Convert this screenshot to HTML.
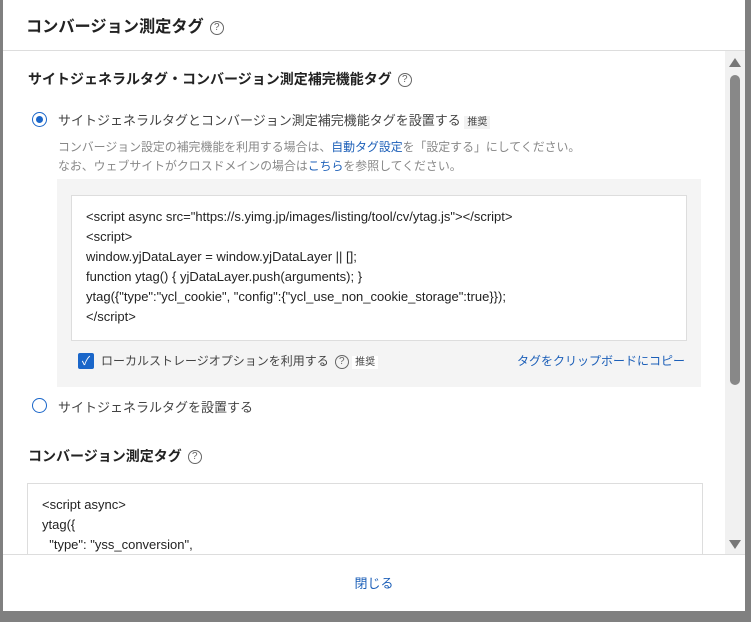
<!DOCTYPE html>
<html><head><meta charset="utf-8"><style>
*{box-sizing:border-box;margin:0;padding:0}
body{width:751px;height:622px;background:#808080;position:relative;overflow:hidden;font-family:"Liberation Sans","Noto Sans CJK JP",sans-serif;color:#333}
.modal{position:absolute;left:3px;top:0;width:742px;height:611px;background:#fff;overflow:hidden}
.hd{height:51px;border-bottom:1px solid #ddd;padding:13px 0 0 23px;font-size:16.2px;font-weight:bold;color:#222}
.q{display:inline-block;width:14px;height:14px;border:1px solid #666;border-radius:50%;font-size:10px;line-height:12px;text-align:center;color:#666;font-weight:normal;vertical-align:middle;margin-left:6px}
.abs{position:absolute;white-space:nowrap}
.h2{font-size:14px;font-weight:bold;color:#222}
.radio{width:15px;height:15px;border:1.5px solid #1a66c9;border-radius:50%;position:absolute}
.radio.on::after{content:"";position:absolute;left:2.5px;top:2.5px;width:7px;height:7px;border-radius:50%;background:#1a66c9}
.badge{background:#f2f2f2;font-size:10px;padding:1px 3px;color:#444}
.note{font-size:11.9px;color:#888}
.link{color:#1c5fb8}
.gray{position:absolute;left:54px;top:179px;width:644px;height:208px;background:#f4f4f4}
.ta{position:absolute;left:68px;top:195px;width:616px;height:146px;background:#fff;border:1px solid #ddd;padding:11px 0 0 14px;font-size:13px;line-height:20px;color:#222;white-space:pre}
.ta2{position:absolute;left:24px;top:483px;width:676px;height:80px;background:#fff;border:1px solid #ddd;padding:11px 0 0 14px;font-size:13px;line-height:20px;color:#222;white-space:pre}
.cb{position:absolute;left:75px;top:353px;width:16px;height:16px;background:#1a66c9;border-radius:2px;color:#fff;font-size:12px;line-height:16px;text-align:center}
.sb{position:absolute;left:722px;top:51px;width:20px;height:503px;background:#f1f1f1}
.thumb{position:absolute;left:727px;top:75px;width:10px;height:310px;background:#888;border-radius:5px}
.ft{position:absolute;left:0;top:554px;width:742px;height:57px;border-top:1px solid #ddd;background:#fff;text-align:center;padding-top:18px;font-size:13px;color:#1c5fb8}
</style></head><body>
<div class="modal">
<div class="hd">コンバージョン測定タグ<span class="q">?</span></div>
<div class="abs h2" style="left:25px;top:69px">サイトジェネラルタグ・コンバージョン測定補完機能タグ<span class="q">?</span></div>
<div class="radio on" style="left:29px;top:112px"></div>
<div class="abs" style="left:55px;top:110px;font-size:13px;color:#444">サイトジェネラルタグとコンバージョン測定補完機能タグを設置する <span class="badge">推奨</span></div>
<div class="abs note" style="left:55px;top:138px">コンバージョン設定の補完機能を利用する場合は、<span class="link">自動タグ設定</span>を「設定する」にしてください。</div>
<div class="abs note" style="left:55px;top:157px">なお、ウェブサイトがクロスドメインの場合は<span class="link">こちら</span>を参照してください。</div>
<div class="gray"></div>
<div class="ta">&lt;script async src="https://s.yimg.jp/images/listing/tool/cv/ytag.js"&gt;&lt;/script&gt;
&lt;script&gt;
window.yjDataLayer = window.yjDataLayer || [];
function ytag() { yjDataLayer.push(arguments); }
ytag({"type":"ycl_cookie", "config":{"ycl_use_non_cookie_storage":true}});
&lt;/script&gt;</div>
<div class="cb">✓</div>
<div class="abs" style="left:98px;top:352px;font-size:12px;color:#444">ローカルストレージオプションを利用する<span class="q">?</span> <span class="badge" style="background:#fff">推奨</span></div>
<div class="abs link" style="left:514px;top:352px;font-size:12px">タグをクリップボードにコピー</div>
<div class="radio" style="left:29px;top:398px"></div>
<div class="abs" style="left:55px;top:397px;font-size:13px;color:#444">サイトジェネラルタグを設置する</div>
<div class="abs h2" style="left:25px;top:446px">コンバージョン測定タグ<span class="q">?</span></div>
<div class="ta2">&lt;script async&gt;
ytag({
  "type": "yss_conversion",</div>
<div class="sb"></div>
<div class="thumb"></div>
<div class="abs" style="left:726px;top:58px;width:0;height:0;border-left:6px solid transparent;border-right:6px solid transparent;border-bottom:9px solid #777"></div>
<div class="abs" style="left:726px;top:540px;width:0;height:0;border-left:6px solid transparent;border-right:6px solid transparent;border-top:9px solid #777"></div>
<div class="ft">閉じる</div>
</div>
</body></html>
